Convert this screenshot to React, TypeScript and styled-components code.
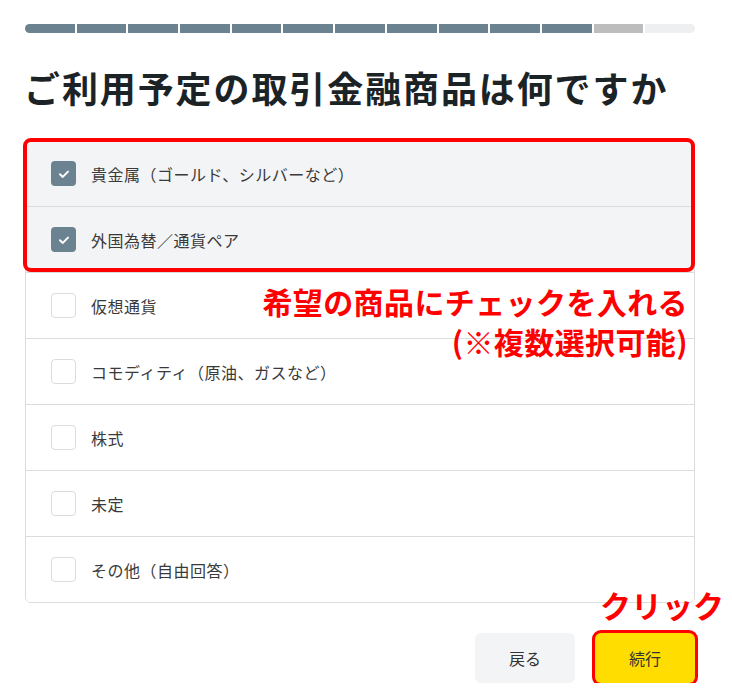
import React, { FC } from "react";
import styled, { createGlobalStyle } from "styled-components";

const GlobalStyle = createGlobalStyle`
  html, body {
    margin: 0;
    padding: 0;
    background: #ffffff;
    font-family: "Noto Sans CJK JP", "Noto Sans", sans-serif;
    color: #333333;
  }
`;

interface IOption {
  label: string;
  checked: boolean;
}

const options: IOption[] = [
  { label: "貴金属（ゴールド、シルバーなど）", checked: true },
  { label: "外国為替／通貨ペア", checked: true },
  { label: "仮想通貨", checked: false },
  { label: "コモディティ（原油、ガスなど）", checked: false },
  { label: "株式", checked: false },
  { label: "未定", checked: false },
  { label: "その他（自由回答）", checked: false },
];

const TOTAL_STEPS = 13;
const DONE_STEPS = 11;

const CheckIcon: FC = () => (
  <svg width="14" height="14" viewBox="0 0 14 14">
    <path
      d="M3 7.3 L5.8 9.9 L11 4.6"
      fill="none"
      stroke="#ffffff"
      strokeWidth="2"
      strokeLinecap="round"
      strokeLinejoin="round"
    />
  </svg>
);

const App: FC = () => {
  return (
    <Page>
      <GlobalStyle />
      <Progress>
        {Array.from({ length: TOTAL_STEPS }).map((_, i) => (
          <Step
            key={i}
            $state={i < DONE_STEPS ? "done" : i === DONE_STEPS ? "current" : "todo"}
          />
        ))}
      </Progress>

      <Title>ご利用予定の取引金融商品は何ですか</Title>

      <ListArea>
        <Card>
          {options.map((o) => (
            <Row key={o.label} $checked={o.checked}>
              <Box $checked={o.checked}>{o.checked && <CheckIcon />}</Box>
              <Label>{o.label}</Label>
            </Row>
          ))}
        </Card>
        <Highlight />
        <Note>
          希望の商品にチェックを入れる
          <br />
          (※複数選択可能)
        </Note>
      </ListArea>

      <Footer>
        <BackButton>戻る</BackButton>
        <NextWrap>
          <ClickNote>クリック</ClickNote>
          <NextButton>続行</NextButton>
        </NextWrap>
      </Footer>
    </Page>
  );
};

export default App;

const Page = styled.div`
  width: 670px;
  padding: 24px 0 0 25px;
`;

const Progress = styled.div`
  display: flex;
  gap: 2px;
  height: 9px;
  border-radius: 5px;
  overflow: hidden;
`;

const Step = styled.div<{ $state: "done" | "current" | "todo" }>`
  flex: 1;
  background: ${({ $state }) =>
    $state === "done" ? "#6b8291" : $state === "current" ? "#bdbdbd" : "#eeeff1"};
`;

const Title = styled.h1`
  margin: 31px 0 0 -1px;
  font-size: 36px;
  line-height: 46px;
  font-weight: 700;
  color: #1c2326;
  letter-spacing: 1.9px;
  white-space: nowrap;
`;

const ListArea = styled.div`
  position: relative;
  margin-top: 30px;
`;

const Card = styled.div`
  border: 1px solid #dcdcdc;
  border-radius: 6px;
  overflow: hidden;
`;

const Row = styled.div<{ $checked: boolean }>`
  display: flex;
  align-items: center;
  height: 65px;
  padding-left: 25px;
  background: ${({ $checked }) => ($checked ? "#f3f4f6" : "#ffffff")};
  & + & {
    border-top: 1px solid #dcdcdc;
  }
`;

const Box = styled.div<{ $checked: boolean }>`
  box-sizing: border-box;
  width: 25px;
  height: 25px;
  border-radius: 4px;
  display: flex;
  align-items: center;
  justify-content: center;
  background: ${({ $checked }) => ($checked ? "#6b8291" : "#ffffff")};
  border: ${({ $checked }) => ($checked ? "none" : "1px solid #dcdcdc")};
`;

const Label = styled.span`
  margin-left: 15px;
  font-size: 16px;
  letter-spacing: 0.5px;
  color: #3a3a3a;
`;

const Highlight = styled.div`
  position: absolute;
  left: -2px;
  top: -2px;
  width: 672px;
  height: 134px;
  box-sizing: border-box;
  border: 4px solid #ff0000;
  border-radius: 8px;
  pointer-events: none;
`;

const Note = styled.div`
  position: absolute;
  right: 7px;
  top: 141px;
  text-align: right;
  font-size: 30px;
  line-height: 40px;
  font-weight: 700;
  letter-spacing: 0.4px;
  color: #ff0000;
  white-space: nowrap;
`;

const Footer = styled.div`
  display: flex;
  justify-content: flex-end;
  gap: 20px;
  margin-top: 30px;
`;

const BaseButton = styled.div`
  box-sizing: border-box;
  width: 100px;
  height: 50px;
  border-radius: 6px;
  display: flex;
  align-items: center;
  justify-content: center;
  font-size: 16px;
  color: #333333;
`;

const BackButton = styled(BaseButton)`
  background: #f3f4f6;
`;

const NextWrap = styled.div`
  position: relative;
`;

const NextButton = styled(BaseButton)`
  background: #ffdd00;
  box-shadow: 0 0 0 3px #ff0000;
  border-radius: 6px;
`;

const ClickNote = styled.div`
  position: absolute;
  left: 5px;
  bottom: 60px;
  font-size: 31px;
  line-height: 36px;
  font-weight: 700;
  color: #ff0000;
  white-space: nowrap;
`;
